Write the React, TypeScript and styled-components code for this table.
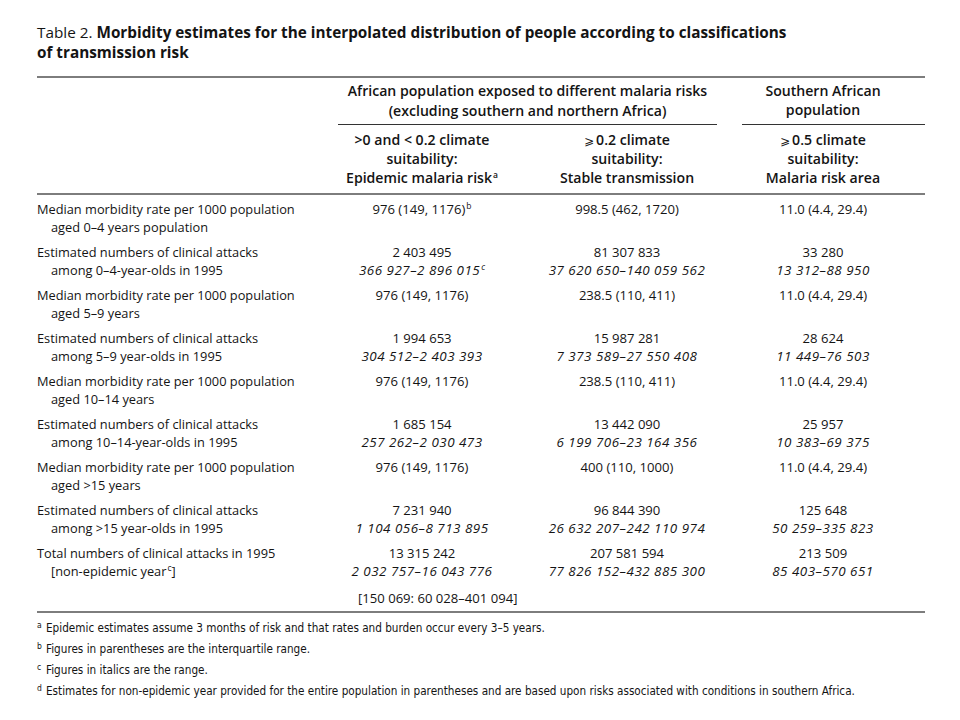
import React from "react";
import styled, { createGlobalStyle } from "styled-components";

const GlobalStyle = createGlobalStyle`
  html, body { margin: 0; padding: 0; background: #fff; }
  body { font-family: "Open Sans", "Noto Sans", sans-serif; color: #141414; }
`;

const Page = styled.div`
  padding: 22px 0 0 37px;
  width: 888px;
`;

const Title = styled.h1`
  margin: 0 0 14px;
  font-size: 15.3px;
  line-height: 20px;
  font-weight: 700;
  color: #141414;
`;

const TitleLabel = styled.span`
  font-weight: 400;
`;

const Table = styled.div`
  border-top: 2px solid #7d7d7d;
  border-bottom: 2px solid #7d7d7d;
`;

const cols = "301px 168px 236px 183px";

const HeadRow = styled.div`
  display: grid;
  grid-template-columns: ${cols};
`;

const GroupHead = styled.div<{ $span: string; $pr: number }>`
  grid-column: ${(p) => p.$span};
  margin-right: ${(p) => p.$pr}px;
  padding: 3px 0 3px;
  border-bottom: 1.5px solid #333;
  text-align: center;
  font-size: 14.1px;
  font-weight: 600;
  line-height: 20px;
`;

const SubHeadRow = styled.div`
  display: grid;
  grid-template-columns: ${cols};
  padding: 5px 0 6px;
  border-bottom: 2px solid #7d7d7d;
`;

const SubHead = styled.div<{ $pl?: number; $pr?: number }>`
  padding-left: ${(p) => p.$pl ?? 0}px;
  padding-right: ${(p) => p.$pr ?? 0}px;
  text-align: center;
  font-size: 14.1px;
  font-weight: 600;
  line-height: 19px;
  white-space: nowrap;
`;

const Geq = styled.span`
  font-family: "DejaVu Sans", sans-serif;
  font-weight: 400;
  font-size: 12px;
  line-height: 0;
  margin-right: 2px;
`;

const Body = styled.div`
  display: flex;
  flex-direction: column;
  gap: 7px;
  padding: 5px 0 4px;
`;

const Row = styled.div`
  display: grid;
  grid-template-columns: ${cols};
  font-size: 12.8px;
  line-height: 18px;
`;

const LabelCell = styled.div`
  display: flex;
  flex-direction: column;
`;

const LabelSub = styled.span`
  padding-left: 14px;
`;

const NumCell = styled.div<{ $pl?: number; $pr?: number }>`
  display: flex;
  flex-direction: column;
  align-items: center;
  padding-left: ${(p) => p.$pl ?? 0}px;
  padding-right: ${(p) => p.$pr ?? 0}px;
  white-space: nowrap;
  font-size: 13.1px;
`;

const Range = styled.span`
  font-style: italic;
  font-size: 13.4px;
  letter-spacing: 0.5px;
`;

const Sup = styled.sup`
  font-size: 8.5px;
  line-height: 0;
  vertical-align: 5px;
  margin-left: 1px;
  letter-spacing: 0;
`;

const ExtraRow = styled.div`
  display: grid;
  grid-template-columns: ${cols};
  font-size: 13.1px;
  line-height: 18px;
  margin-top: 2px;
`;

const Bracket = styled.div`
  grid-column: 2;
  padding-left: 20px;
  text-align: center;
  white-space: nowrap;
`;

const Notes = styled.div`
  padding-top: 5px;
  font-family: "DejaVu Sans Condensed", "Open Sans", sans-serif;
  font-stretch: condensed;
  font-size: 11.65px;
  line-height: 20px;
  color: #141414;
`;

const Note = styled.div`
  display: flex;
  align-items: baseline;
`;

const NoteMark = styled.span`
  width: 9px;
  font-size: 8.5px;
  position: relative;
  top: -4px;
`;

type Cell = { v: React.ReactNode; r?: React.ReactNode };
type RowData = { l1: string; l2: React.ReactNode; c: [Cell, Cell, Cell] };

const median = (age: string, c1: React.ReactNode, c2: string): RowData => ({
  l1: "Median morbidity rate per 1000 population",
  l2: age,
  c: [{ v: c1 }, { v: c2 }, { v: "11.0 (4.4, 29.4)" }],
});

const rows: RowData[] = [
  median(
    "aged 0–4 years population",
    <>
      976 (149, 1176)<Sup>b</Sup>
    </>,
    "998.5 (462, 1720)"
  ),
  {
    l1: "Estimated numbers of clinical attacks",
    l2: "among 0–4-year-olds in 1995",
    c: [
      {
        v: "2 403 495",
        r: (
          <>
            366 927–2 896 015<Sup>c</Sup>
          </>
        ),
      },
      { v: "81 307 833", r: "37 620 650–140 059 562" },
      { v: "33 280", r: "13 312–88 950" },
    ],
  },
  median("aged 5–9 years", "976 (149, 1176)", "238.5 (110, 411)"),
  {
    l1: "Estimated numbers of clinical attacks",
    l2: "among 5–9 year-olds in 1995",
    c: [
      { v: "1 994 653", r: "304 512–2 403 393" },
      { v: "15 987 281", r: "7 373 589–27 550 408" },
      { v: "28 624", r: "11 449–76 503" },
    ],
  },
  median("aged 10–14 years", "976 (149, 1176)", "238.5 (110, 411)"),
  {
    l1: "Estimated numbers of clinical attacks",
    l2: "among 10–14-year-olds in 1995",
    c: [
      { v: "1 685 154", r: "257 262–2 030 473" },
      { v: "13 442 090", r: "6 199 706–23 164 356" },
      { v: "25 957", r: "10 383–69 375" },
    ],
  },
  median("aged >15 years", "976 (149, 1176)", "400 (110, 1000)"),
  {
    l1: "Estimated numbers of clinical attacks",
    l2: "among >15 year-olds in 1995",
    c: [
      { v: "7 231 940", r: "1 104 056–8 713 895" },
      { v: "96 844 390", r: "26 632 207–242 110 974" },
      { v: "125 648", r: "50 259–335 823" },
    ],
  },
  {
    l1: "Total numbers of clinical attacks in 1995",
    l2: (
      <>
        [non-epidemic year<Sup>c</Sup>]
      </>
    ),
    c: [
      { v: "13 315 242", r: "2 032 757–16 043 776" },
      { v: "207 581 594", r: "77 826 152–432 885 300" },
      { v: "213 509", r: "85 403–570 651" },
    ],
  },
];

const cellPad: { pl?: number; pr?: number }[] = [{}, { pl: 6 }, { pr: 21 }];

const notes: [string, string][] = [
  ["a", "Epidemic estimates assume 3 months of risk and that rates and burden occur every 3–5 years."],
  ["b", "Figures in parentheses are the interquartile range."],
  ["c", "Figures in italics are the range."],
  [
    "d",
    "Estimates for non-epidemic year provided for the entire population in parentheses and are based upon risks associated with conditions in southern Africa.",
  ],
];

export default function App() {
  return (
    <>
      <GlobalStyle />
      <Page>
        <Title>
          <TitleLabel>Table 2. </TitleLabel>
          Morbidity estimates for the interpolated distribution of people according to classifications
          <br />
          of transmission risk
        </Title>
        <Table>
          <HeadRow>
            <GroupHead $span="2 / 4" $pr={25}>
              African population exposed to different malaria risks
              <br />
              (excluding southern and northern Africa)
            </GroupHead>
            <GroupHead $span="4 / 5" $pr={0}>
              <SubHead $pr={21}>
                Southern African
                <br />
                population
              </SubHead>
            </GroupHead>
          </HeadRow>
          <SubHeadRow>
            <div />
            <SubHead>
              &gt;0 and &lt; 0.2 climate
              <br />
              suitability:
              <br />
              Epidemic malaria risk<Sup>a</Sup>
            </SubHead>
            <SubHead $pl={6}>
              <Geq>⩾</Geq>0.2 climate
              <br />
              suitability:
              <br />
              Stable transmission
            </SubHead>
            <SubHead $pr={21}>
              <Geq>⩾</Geq>0.5 climate
              <br />
              suitability:
              <br />
              Malaria risk area
            </SubHead>
          </SubHeadRow>
          <Body>
            {rows.map((row, i) => (
              <Row key={i}>
                <LabelCell>
                  <span>{row.l1}</span>
                  <LabelSub>{row.l2}</LabelSub>
                </LabelCell>
                {row.c.map((cell, j) => (
                  <NumCell key={j} $pl={cellPad[j].pl} $pr={cellPad[j].pr}>
                    <span>{cell.v}</span>
                    {cell.r && <Range>{cell.r}</Range>}
                  </NumCell>
                ))}
              </Row>
            ))}
            <ExtraRow>
              <Bracket>[150 069: 60 028–401 094]</Bracket>
            </ExtraRow>
          </Body>
        </Table>
        <Notes>
          {notes.map(([m, t]) => (
            <Note key={m}>
              <NoteMark>{m}</NoteMark>
              <span>{t}</span>
            </Note>
          ))}
        </Notes>
      </Page>
    </>
  );
}
